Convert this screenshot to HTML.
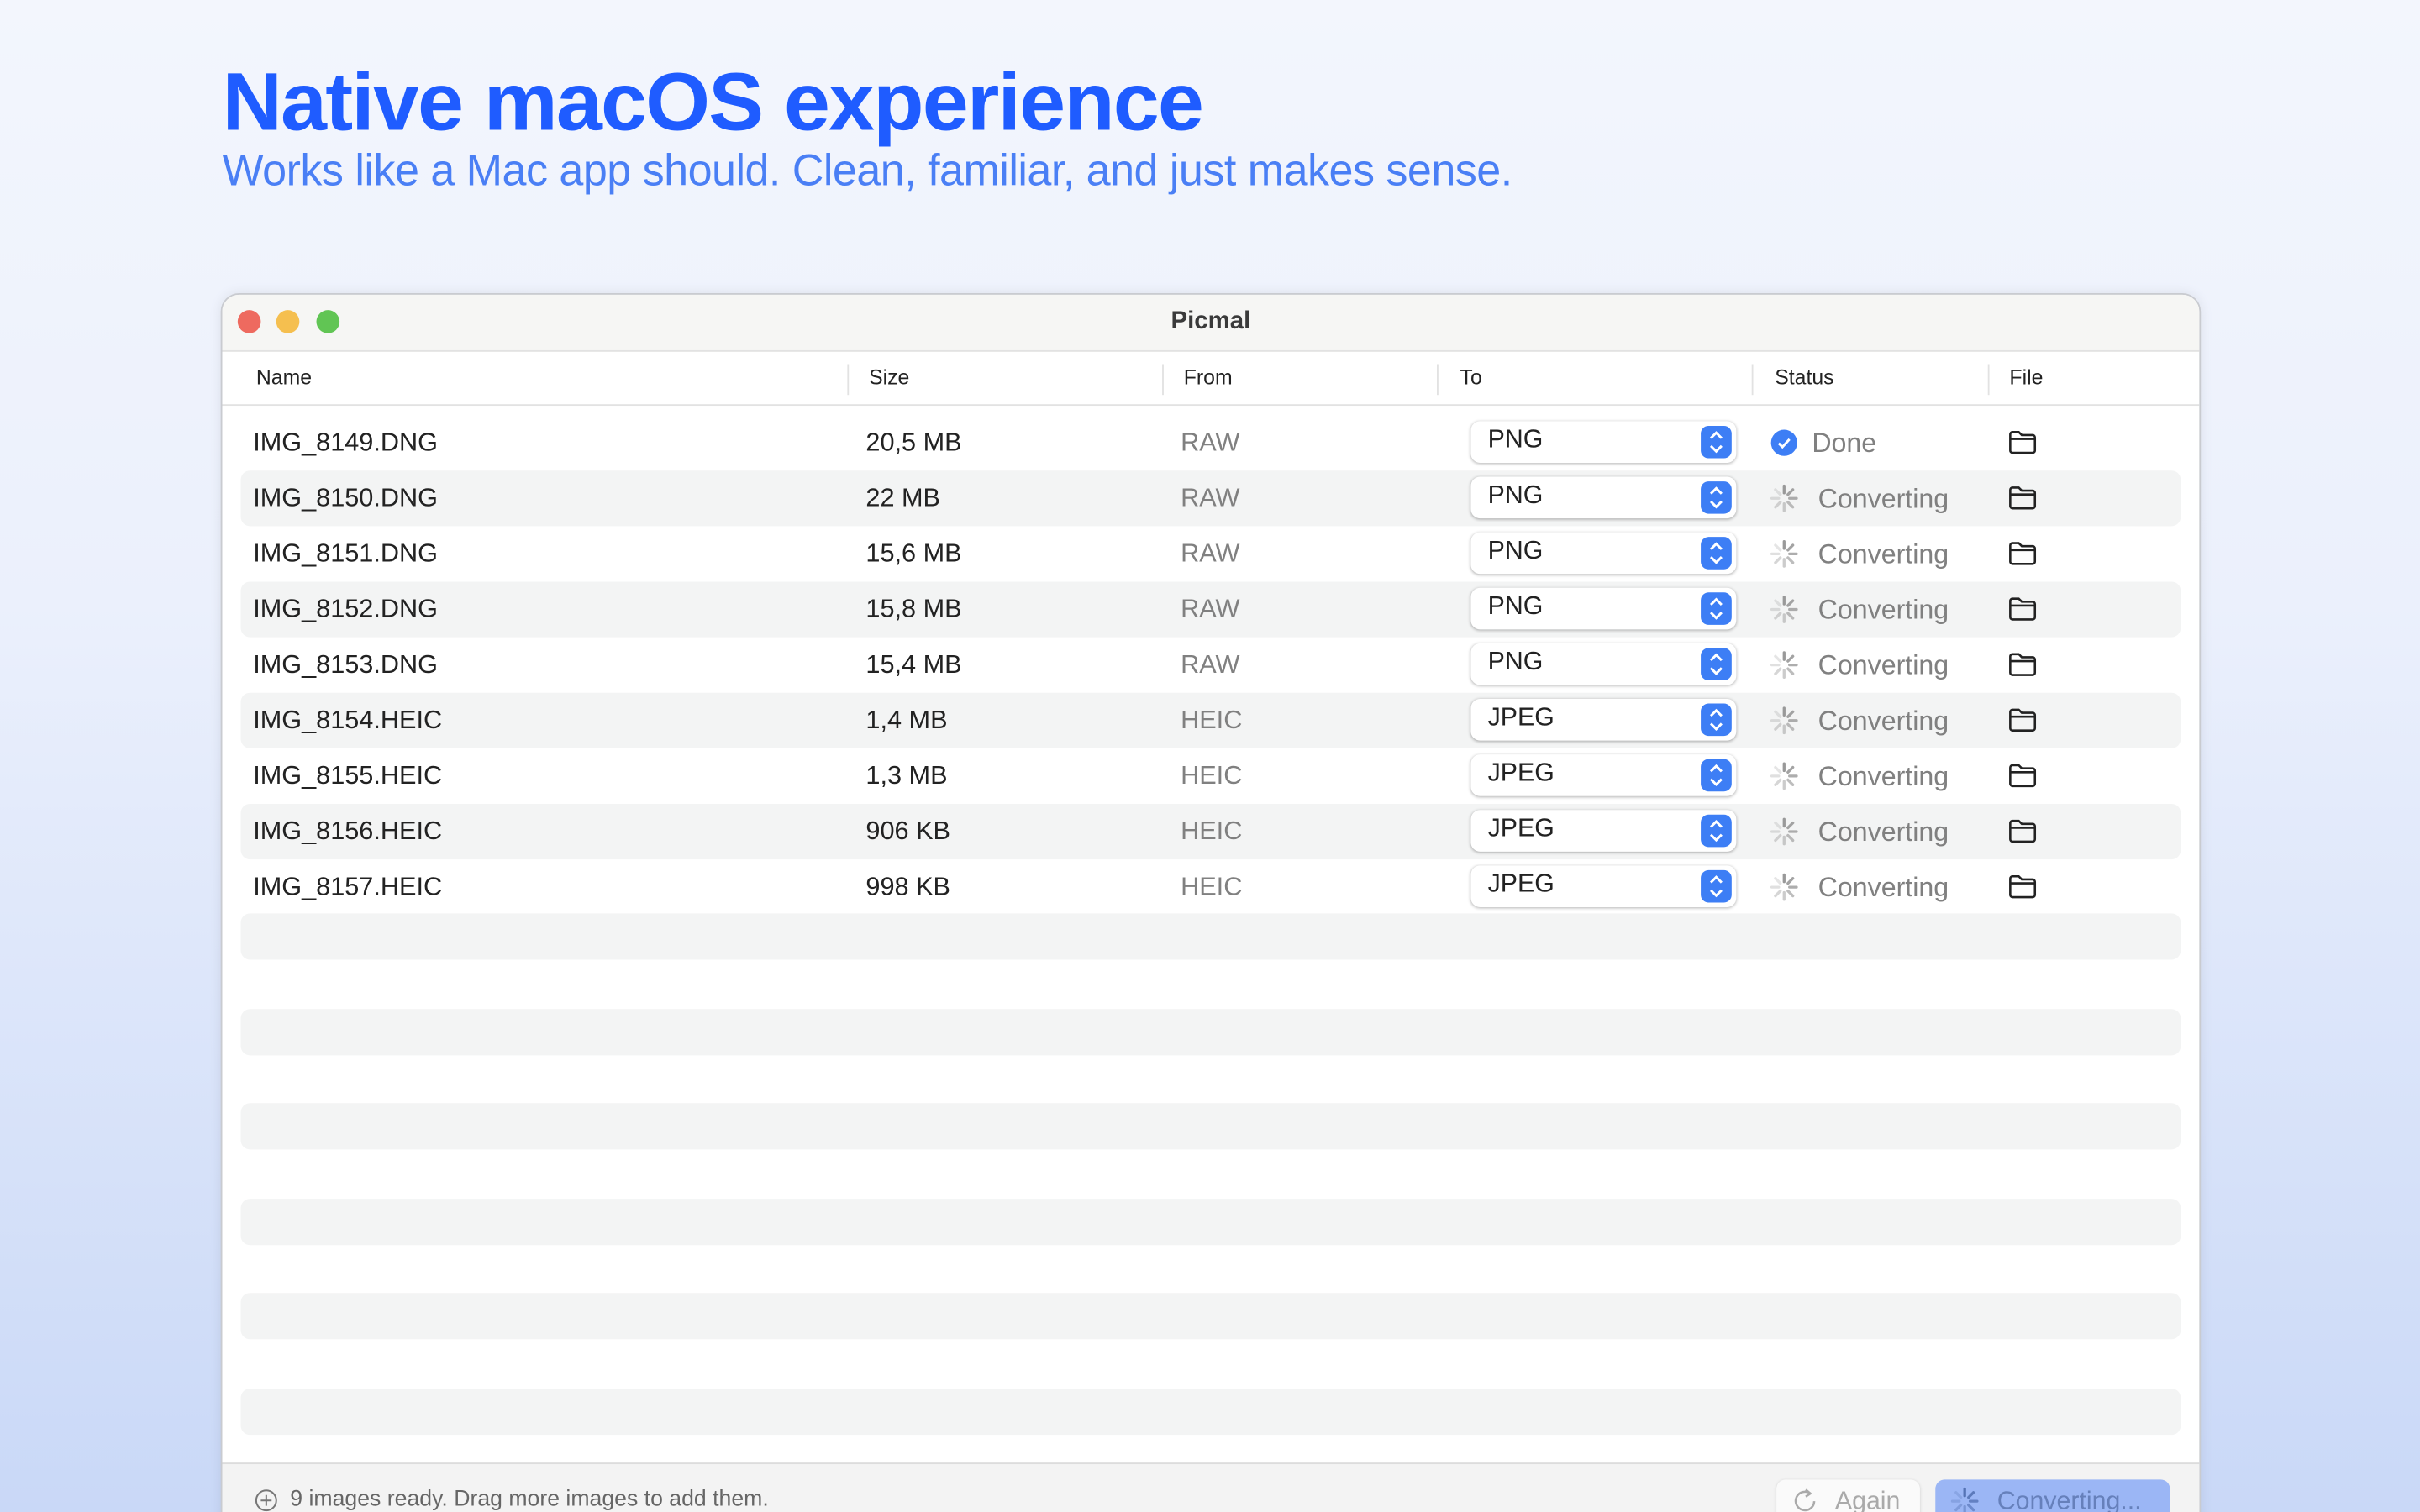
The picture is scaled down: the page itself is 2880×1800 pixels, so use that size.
<!DOCTYPE html>
<html><head><meta charset="utf-8"><style>
*{margin:0;padding:0;box-sizing:border-box}
html,body{width:2880px;height:1800px;overflow:hidden}
body{background:linear-gradient(180deg,#f3f6fd 0%,#ebf0fc 40%,#c9d8f7 100%);font-family:"Liberation Sans",sans-serif}
#s{position:absolute;left:0;top:0;width:1568px;height:980px;transform:scale(1.83674);transform-origin:0 0;overflow:hidden}
.a{position:absolute}
h1{position:absolute;left:144px;top:36px;font-size:53px;font-weight:bold;color:#1f5cff;white-space:nowrap;transform:scaleX(1.016);transform-origin:0 0;letter-spacing:-1px}
.sub{position:absolute;left:144px;top:95px;font-size:29px;color:#4a7ff5;white-space:nowrap;transform:scaleX(0.978);transform-origin:0 0;letter-spacing:-0.3px}
.win{position:absolute;left:143px;top:190px;width:1283px;height:800px;background:#fff;border-radius:12px 12px 0 0;border:1px solid #c9cbd0;overflow:hidden;box-shadow:0 0 8px rgba(0,0,0,.08)}
.tb{position:absolute;left:0;top:0;width:100%;height:37px;background:#f6f6f4;border-bottom:1px solid #e2e2e2}
.dot{position:absolute;top:10px;width:15px;height:15px;border-radius:50%}
.ttl{position:absolute;top:9px;left:0;width:100%;text-align:center;font-weight:bold;font-size:16px;color:#3a3a3a}
.hd{position:absolute;top:37px;left:0;width:100%;height:35px;border-bottom:1px solid #e2e2e2;font-size:13.5px;color:#222}
.hd span{position:absolute;top:9px}
.sep{position:absolute;top:8px;width:1px;height:20px;background:#e2e2e2}
.row{position:absolute;left:12px;width:1257px;height:36px;font-size:16.7px;color:#222}
.row.z{background:#f3f4f4;border-radius:6px}
.row span{position:absolute;top:8px}
.g{color:#808080}
.st{font-size:17.5px}
.dd{position:absolute;left:797px;top:4px;width:172px;height:27px;background:#fff;border-radius:6px;box-shadow:0 0.5px 2px rgba(0,0,0,.3)}
.dd b{position:absolute;left:11px;top:3px;font-weight:normal;font-size:16.5px;color:#222}
.dd i{position:absolute;right:3px;top:3px;width:20px;height:21px;background:#3d7ef5;border-radius:5px}
.emp{position:absolute;left:12px;width:1257px;height:30px;background:#f3f4f4;border-radius:6px}
.ft{position:absolute;left:0;top:757px;width:100%;height:60px;background:#f3f3f3;border-top:1px solid #dcdcdc}
</style></head><body><div id="s">
<h1>Native macOS experience</h1>
<div class="sub">Works like a Mac app should. Clean, familiar, and just makes sense.</div>
<div class="win">
<div class="tb"><div class="dot" style="left:10px;background:#ee6a5f"></div><div class="dot" style="left:35px;background:#f5bf4f"></div><div class="dot" style="left:61px;background:#61c554"></div><div class="ttl">Picmal</div></div>
<div class="hd"><span style="left:22px">Name</span><div class="sep" style="left:405px"></div><span style="left:419px">Size</span><div class="sep" style="left:609px"></div><span style="left:623px">From</span><div class="sep" style="left:787px"></div><span style="left:802px">To</span><div class="sep" style="left:991px"></div><span style="left:1006px">Status</span><div class="sep" style="left:1144px"></div><span style="left:1158px">File</span></div>
<div id="rows"></div>
<div class="emp" style="top:401px"></div><div class="emp" style="top:463px"></div><div class="emp" style="top:524px"></div><div class="emp" style="top:586px"></div><div class="emp" style="top:647px"></div><div class="emp" style="top:709px"></div>
<div class="ft">
<svg class="a" style="left:21px;top:16px" width="15" height="15" viewBox="0 0 15 15"><circle cx="7.5" cy="7.5" r="6.5" fill="none" stroke="#777" stroke-width="1.1"/><path d="M7.5 4v7M4 7.5h7" stroke="#777" stroke-width="1.1"/></svg>
<span class="a" style="left:44px;top:15px;font-size:14.5px;color:#666">9 images ready. Drag more images to add them.</span>
<div class="a" style="left:1007px;top:10px;width:93px;height:30px;background:#fafafa;border-radius:6px;box-shadow:0 0.5px 2px rgba(0,0,0,.15)"><svg class="a" style="left:10px;top:5px" width="18" height="18" viewBox="0 0 18 18"><path d="M12 4A6 6 0 1 0 14.5 9" fill="none" stroke="#aaa" stroke-width="1.4"/><path d="M9 1.5l3 2.5-3 2" fill="none" stroke="#aaa" stroke-width="1.4"/></svg><span class="a" style="left:38px;top:5px;font-size:16.5px;color:#aaa">Again</span></div>
<div class="a" style="left:1110px;top:10px;width:152px;height:30px;background:#9bb6f5;border-radius:6px"><svg class="a" style="left:10px;top:5px" width="18" height="18" viewBox="-9 -9 18 18" id="bsp"></svg><span class="a" style="left:40px;top:5px;font-size:16.5px;color:#6680bb">Converting...</span></div>
</div>
</div>
</div>
<script>
var d=[["IMG_8149.DNG","20,5 MB","RAW","PNG"],["IMG_8150.DNG","22 MB","RAW","PNG"],["IMG_8151.DNG","15,6 MB","RAW","PNG"],["IMG_8152.DNG","15,8 MB","RAW","PNG"],["IMG_8153.DNG","15,4 MB","RAW","PNG"],["IMG_8154.HEIC","1,4 MB","HEIC","JPEG"],["IMG_8155.HEIC","1,3 MB","HEIC","JPEG"],["IMG_8156.HEIC","906 KB","HEIC","JPEG"],["IMG_8157.HEIC","998 KB","HEIC","JPEG"]];
function sp(c){var s="";for(var k=0;k<8;k++){var a=k*Math.PI/4,op=[1,.9,.8,.65,.5,.4,.3,.25][k];s+='<line x1="'+(Math.sin(a)*3.5).toFixed(2)+'" y1="'+(-Math.cos(a)*3.5).toFixed(2)+'" x2="'+(Math.sin(a)*8).toFixed(2)+'" y2="'+(-Math.cos(a)*8).toFixed(2)+'" stroke="'+c+'" stroke-opacity="'+op+'" stroke-width="1.8" stroke-linecap="round"/>';}return s;}
var h="";
d.forEach(function(r,i){
var st=i==0?'<svg class="a" style="left:991px;top:9px" width="18" height="18" viewBox="0 0 18 18"><circle cx="9" cy="9" r="8.5" fill="#3d7ef5"/><path d="M5.5 9.3l2.4 2.4 4.6-5" fill="none" stroke="#fff" stroke-width="1.6"/></svg><span class="g st" style="left:1018px">Done</span>':'<svg class="a" style="left:990px;top:8px" width="20" height="20" viewBox="-10 -10 20 20">'+sp('#999')+'</svg><span class="g st" style="left:1022px">Converting</span>';
h+='<div class="row'+(i%2?' z':'')+'" style="top:'+(78+i*36)+'px"><span style="left:8px">'+r[0]+'</span><span style="left:405px">'+r[1]+'</span><span class="g" style="left:609px">'+r[2]+'</span><div class="dd"><b>'+r[3]+'</b><i><svg width="20" height="21" viewBox="0 0 20 21"><path d="M6.5 8L10 4.5 13.5 8M6.5 13L10 16.5 13.5 13" fill="none" stroke="#fff" stroke-width="1.6"/></svg></i></div>'+st+'<svg class="a" style="left:1145px;top:9px" width="19" height="17" viewBox="0 0 19 17"><path d="M1.5 3.5a1.5 1.5 0 0 1 1.5-1.5h4l2 2h7a1.5 1.5 0 0 1 1.5 1.5v8.5a1.5 1.5 0 0 1-1.5 1.5h-13A1.5 1.5 0 0 1 1.5 14zM1.5 6.5h16" fill="none" stroke="#222" stroke-width="1.4"/></svg></div>';
});
document.getElementById("rows").innerHTML=h;
document.getElementById("bsp").innerHTML=sp('#5573b5');
</script>
</body></html>
